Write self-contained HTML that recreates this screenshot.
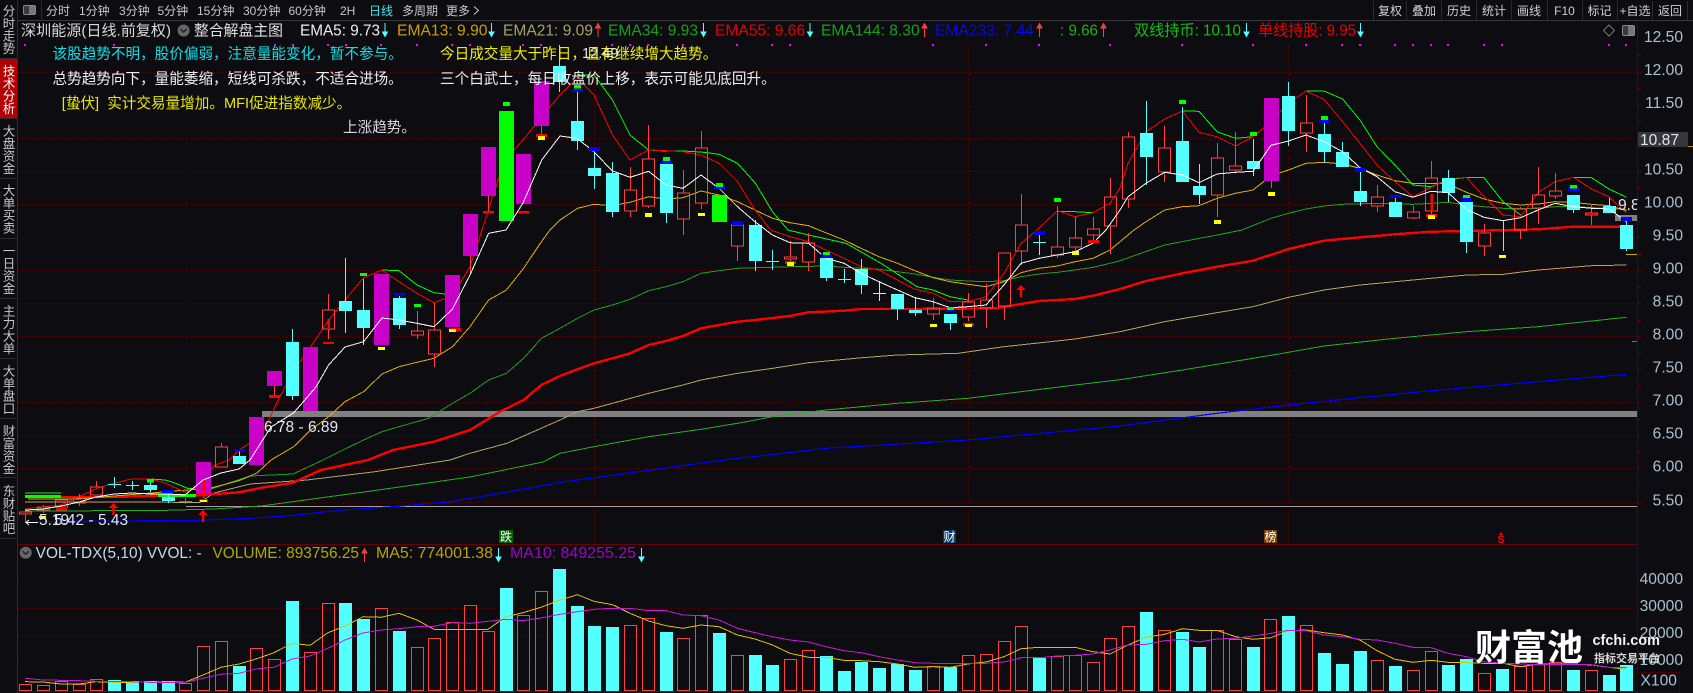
<!DOCTYPE html>
<html lang="zh"><head><meta charset="utf-8"><title>深圳能源</title>
<style>
html,body{margin:0;padding:0;background:#0d0d11;width:1693px;height:693px;overflow:hidden}
svg{display:block}
text{font-family:"Liberation Sans","Noto Sans CJK SC",sans-serif;white-space:pre}
.nav{font-size:12px;fill:#c8c8c8}
.btn{font-size:12px;fill:#d0d0d0;text-anchor:middle}
.leg{font-size:15.4px}
.msg{font-size:14.6px}
.side{font-size:12.5px;fill:#c8c8c8;text-anchor:middle}
.ax{font-size:15.6px;fill:#a8c0d2;text-anchor:end}
</style></head><body>
<svg width="1693" height="693" viewBox="0 0 1693 693" xmlns="http://www.w3.org/2000/svg">
<defs>
<path id="ad" d="M0 23V33M-2.5 32H2.5L0 36.5Z" fill="#54ffff" stroke="#54ffff" stroke-width="1"/>
<path id="au" d="M0 37V27M-2.5 28H2.5L0 23.5Z" fill="#ff3c3c" stroke="#ff3c3c" stroke-width="1"/>
<path id="bigu" d="M-1.2 12V5H-4.8L0 0L4.8 5H1.2V12Z" fill="#ff0000"/>
</defs>
<rect width="1693" height="693" fill="#0d0d11"/>

<!-- grid -->
<g stroke="#620000" stroke-width="1" stroke-dasharray="1 3" shape-rendering="crispEdges" fill="none">
<path d="M18 72.5H1637M18 105.5H1637M18 138.5H1637M18 171.5H1637M18 204.5H1637M18 237.5H1637M18 270.5H1637M18 303.5H1637M18 336.5H1637M18 369.5H1637M18 402.5H1637M18 435.5H1637M18 468.5H1637M18 502.5H1637"/>
<path d="M18 581.5H1637M18 608.5H1637M18 635.5H1637M18 661.5H1637"/>
<path d="M185.5 46V544M594.5 46V544M968.5 46V544M1288.5 46V544"/>
</g>
<path d="M18 544.5H1637M18 691.5H1637" stroke="#6b0000" fill="none" shape-rendering="crispEdges"/>
<path d="M1637.5 22V693" stroke="#5a0000" fill="none" shape-rendering="crispEdges"/>
<path d="M1637 55.5h4M1637 72.5h4M1637 88.5h4M1637 105.5h4M1637 121.5h4M1637 171.5h4M1637 188.5h4M1637 204.5h4M1637 221.5h4M1637 237.5h4M1637 254.5h4M1637 270.5h4M1637 287.5h4M1637 303.5h4M1637 320.5h4M1637 336.5h4M1637 353.5h4M1637 369.5h4M1637 386.5h4M1637 402.5h4M1637 419.5h4M1637 435.5h4M1637 452.5h4M1637 468.5h4M1637 485.5h4M1637 502.5h4" stroke="#6b0000" shape-rendering="crispEdges"/>

<!-- top bar -->
<path d="M18 20.5H1693" stroke="#38383c" shape-rendering="crispEdges"/>
<path d="M41.5 1V20M1373.5 1V20M1406.5 1V20M1441.5 1V20M1476.5 1V20M1511.5 1V20M1547.5 1V20M1582.5 1V20M1617.5 1V20M1652.5 1V20M1687.5 1V20" stroke="#2c2c30" shape-rendering="crispEdges"/>
<rect x="23.5" y="5.5" width="12" height="9" rx="1.5" fill="#3a3a3e" stroke="#8a8a8a"/><rect x="29" y="6" width="6" height="8" fill="#777"/>
<g class="nav">
<text x="46" y="15">分时</text><text x="79" y="15">1分钟</text><text x="119" y="15">3分钟</text><text x="157.5" y="15">5分钟</text><text x="197" y="15">15分钟</text><text x="243" y="15">30分钟</text><text x="288.5" y="15">60分钟</text><text x="340" y="15">2H</text><text x="369" y="15" style="fill:#3ee8f0">日线</text><text x="402" y="15">多周期</text><text x="446" y="15">更多</text>
</g>
<path d="M474 6.5L478.5 10.5L474 14.5" stroke="#c8c8c8" fill="none"/>
<g class="btn">
<text x="1390" y="15">复权</text><text x="1424" y="15">叠加</text><text x="1459" y="15">历史</text><text x="1494" y="15">统计</text><text x="1529" y="15">画线</text><text x="1564.5" y="15">F10</text><text x="1599.5" y="15">标记</text><text x="1635" y="15">+自选</text><text x="1670" y="15">返回</text>
</g>

<!-- sidebar -->
<rect x="0" y="59" width="17" height="59" fill="#b30000"/>
<path d="M17.5 0V693M0 58.5H18M0 118.5H18M0 178.5H18M0 238.5H18M0 298.5H18M0 358.5H18M0 418.5H18M0 477.5H18M0 538.5H18" stroke="#2c2c30" fill="none" shape-rendering="crispEdges"/>
<g class="side">
<text><tspan x="9" y="15.5">分</tspan><tspan x="9" y="28">时</tspan><tspan x="9" y="40.5">走</tspan><tspan x="9" y="53">势</tspan></text>
<text style="fill:#fff"><tspan x="9" y="75.5">技</tspan><tspan x="9" y="88">术</tspan><tspan x="9" y="100.5">分</tspan><tspan x="9" y="113">析</tspan></text>
<text><tspan x="9" y="135.5">大</tspan><tspan x="9" y="148">盘</tspan><tspan x="9" y="160.5">资</tspan><tspan x="9" y="173">金</tspan></text>
<text><tspan x="9" y="195">大</tspan><tspan x="9" y="207.5">单</tspan><tspan x="9" y="220">买</tspan><tspan x="9" y="232.5">卖</tspan></text>
<text><tspan x="9" y="255.5">一</tspan><tspan x="9" y="268">日</tspan><tspan x="9" y="280.5">资</tspan><tspan x="9" y="293">金</tspan></text>
<text><tspan x="9" y="315.5">主</tspan><tspan x="9" y="328">力</tspan><tspan x="9" y="340.5">大</tspan><tspan x="9" y="353">单</tspan></text>
<text><tspan x="9" y="375.5">大</tspan><tspan x="9" y="388">单</tspan><tspan x="9" y="400.5">盘</tspan><tspan x="9" y="413">口</tspan></text>
<text><tspan x="9" y="435.5">财</tspan><tspan x="9" y="448">富</tspan><tspan x="9" y="460.5">资</tspan><tspan x="9" y="473">金</tspan></text>
<text><tspan x="9" y="495.5">东</tspan><tspan x="9" y="508">财</tspan><tspan x="9" y="520.5">贴</tspan><tspan x="9" y="533">吧</tspan></text>
</g>

<!-- magenta dots -->
<path fill="#ff00ff" shape-rendering="crispEdges" d="M24 44h2v2h-2zM113 44h2v2h-2zM274 44h2v2h-2zM292 44h2v2h-2zM327 44h2v2h-2zM345 44h2v2h-2zM380 44h2v2h-2zM416 44h2v2h-2zM451 44h2v2h-2zM469 44h2v2h-2zM522 44h2v2h-2zM540 44h2v2h-2zM611 44h2v2h-2zM629 44h2v2h-2zM647 44h2v2h-2zM682 44h2v2h-2zM736 44h2v2h-2zM771 44h2v2h-2zM789 44h2v2h-2zM932 44h2v2h-2zM985 44h2v2h-2zM1038 44h2v2h-2zM1109 44h2v2h-2zM1181 44h2v2h-2zM1252 44h2v2h-2zM1305 44h2v2h-2zM1341 44h2v2h-2zM1359 44h2v2h-2zM1394 44h2v2h-2zM1412 44h2v2h-2zM1430 44h2v2h-2zM1447 44h2v2h-2zM1483 44h2v2h-2zM1501 44h2v2h-2zM1608 44h2v2h-2zM1625 44h2v2h-2z"/>

<!-- gray bands -->
<rect x="262" y="411" width="1375" height="6" fill="#808080"/>
<path d="M186 506.5H1637" stroke="#a0a0a0" shape-rendering="crispEdges"/>
<rect x="1615" y="215" width="22" height="6" fill="#808080"/>

<!-- EMA lines -->
<g fill="none" stroke-width="1" shape-rendering="crispEdges">
<polyline stroke="#0000ff" stroke-width="1.2" points="36,521.5 193,520.5 250,518.3 286,516 343,510 393,506.7 450,501.7 500,493.3 560,482.5 631,472.7 724,460 826,448.3 968,440 1120,426 1217,413.3 1288.5,405 1360,397.7 1431,390.7 1538,381.7 1626.6,374.3"/>
<polyline stroke="#22b022" points="25,511 159,510.5 214,509 261,506 364,492 470,477 543,462 560,453.3 594,446.7 648.6,436.7 701,429.3 737.5,423.3 772.5,416.7 826,410 897.5,403.3 968,398.3 1021,391.7 1075,385 1120,379.7 1182.5,370 1253,358.3 1288.5,352.3 1324,346 1395,338.3 1466.5,331.7 1538,326.7 1626.6,317.3"/>
<path stroke="#22b022" d="M1632 341.5H1637"/>
<polyline stroke="#b0a860" points="25,502 200,502.3 214,493 250,484 307,480 375,471.7 450,460 470,453.3 507,443.3 560,420 577.5,411.7 594,408.3 612.5,403.3 648.6,393.3 683,385 701,380 737.5,373.3 772.5,368.3 808.6,362.7 862,357.7 897.5,355 958,353.3 1004,346.7 1075,339 1120,331.7 1164.6,321.7 1217,312.7 1253,306.7 1288.5,297.3 1324,290 1360,285 1431,278.3 1466.5,275 1503,274.3 1538,270 1591.5,265.7 1626.6,265"/>
<polyline stroke="#ff0000" stroke-width="2.4" points="61,497 115,497 161,495.6 195,495.5 211,494.3 239,492.3 264,487.3 293,482.7 321,470 368,460 393,450 434,441.7 470,430 500,411.7 523.6,400 541.4,385 560,376 577.5,369.3 594,363.3 612.5,358.3 630,353.3 648.6,345 666,341 683,336 701,328.3 719,325 737.5,321.7 755,320 790,316 808.6,312.3 844,310.7 861,309 917,309 996,308.3 1021,304 1039,301 1075,299 1093,295.7 1120,289 1146,281 1182.5,273.3 1217,266.7 1253,260.7 1288.5,249 1324,240.7 1360,237.3 1395,234.3 1431,231.7 1466.5,231 1538,229.3 1573,226.7 1626,226.7"/>
<path stroke="#00ff00" stroke-width="3" d="M25 496.7H61M158 495.5H196"/>
<path stroke="#00ff00" d="M25 493H61"/>
<polyline stroke="#1fa01f" points="211,489 250,476 293,474 323,460 343,450 363.6,440 382,431.7 399,426.7 428.6,418.3 452.5,403.3 470,393.3 488.6,380 506.4,373.3 523.6,358.3 541.4,338.3 560,328.3 577.5,318.3 594,310 612.5,305 630,299.3 648.6,290.7 666,286.7 683,281.7 701,273.3 719,270.7 737.5,268.3 772.5,267.3 790,266.7 826,266 844,267.3 861,268.3 879,269.3 897.5,271.7 915,274 933,277.3 950,280 968,281 986,281.7 1004,280.7 1021,276.7 1039,274 1057.5,272.3 1075,270 1093,267.3 1110,263.3 1120,260.7 1164.6,245 1217,235 1242,230 1271,218.3 1288.5,213.3 1306,209 1324,206 1342.6,204.3 1377,203.3 1395,204 1413,204.3 1431,203.3 1448,202.3 1466.5,205 1484,206.7 1503,208.3 1538,208.3 1555,206.7 1573.6,206.7 1626.6,209.3"/>
<polyline stroke="#e0b000" points="28,499 78,499 211,488 239,480.7 257,473 271,460 293.6,446.7 310.7,430 328.6,416.7 345,401.7 363.6,391.7 382,374 399,366.7 417,362.3 434,358.3 452.5,346.7 470,326.7 488.6,300 506.4,290 523.6,268.3 541.4,241.7 550,230 560,220 577.5,208.3 594,204.3 612.5,205.7 630,202.3 648.6,196.7 666,199 683,197.7 701,191 719,195 737.5,201.7 755,210 772.5,218.3 790,222.7 808.6,225.7 819,230 844,240 861,248.3 879,256.7 897.5,263.3 915,270.7 933,277.7 950,281.7 968,284.3 986,286.7 1004,281.7 1021,272.7 1039,268.3 1057.5,266 1075,261.7 1093,258.3 1110,250 1120,241.7 1134,230 1146,221.7 1164.6,210 1182.5,206.7 1199,205.7 1217,198.3 1235.5,193.3 1253,190 1271,175.7 1288.5,170 1306,163.3 1324,162.3 1342.6,164 1360,168.3 1377,175 1395,180.7 1413,183.3 1431,183.3 1448,184 1466.5,192.3 1484,199 1503,203.3 1520.6,205 1538,204 1555,201.7 1573.6,202.3 1591.5,204.3 1609,205.7 1626.6,210.7"/>
<path stroke="#c8b000" d="M1626 254.5H1637"/>
<!-- green segments -->
<g stroke="#00ff00">
<polyline points="144,479 151,479 165,480 175,483 188,488.5 201,488"/>
<polyline points="382,270 399,270.7 417,285 434,292.7 452.5,295"/>
<polyline points="577.5,75 594,75 612.5,100 630,135 648.6,150 666,151 683,151 701,152 719,154.3 737.5,163.3 755,182.7 772.5,211.7 788,230 808.6,235 846,243.3 881,263.3 917,286.7 933,290 950,296.7 968,300"/>
<polyline points="1057.5,211.7 1075,211.7 1093,212.7"/>
<polyline points="1182.5,111 1199,111.3 1217,131.7 1235.5,138.3 1253,136.7"/>
<polyline points="1306,91 1324,91 1342.6,99 1360,120 1377,146.7 1395,165 1413,185 1431,186.7 1448,180 1466.5,177.3 1484,177.7 1503,201.7 1520.6,215"/>
<polyline points="1573.6,177.3 1591.5,177.7 1609,189 1626.6,197.3"/>
</g>
<!-- red thin -->
<polyline stroke="#ff0000" points="25,509 61,505 78,497 98,488 115,483 131,479 151,479 165,483 185,492 195,488 215,465 229,460 239,450 250,443 264,430 275,406.7 293.6,370 310.7,346.7 328.6,320 345,300 363.6,277.7 382,270 399,281.7 417,293.3 434,302.7 452.5,295.7 470,266.7 482,230 498,180 505,160 523,140 541.7,116.7 560,95 577,78.3 594,95 612.5,135 630,160 648.6,150 666,150.7 683,151.7 701,155 719,163.3 737.5,181.7 755,210 770.7,230 790,236.7 808.6,241.7 826,250 844,258.3 861,266.7 879,270 897.5,280 915,289.3 933,293.3 950,301.7 968,301.7 986,296.7 1004,273.3 1021,243.3 1035,231.7 1057.5,210.7 1075,216.7 1093,212.7 1110,203.3 1120,188 1128,163.3 1146,131.7 1164.6,119 1182.5,111 1199,132.3 1217,136.7 1235.5,146 1253,136.7 1271,121.7 1288.5,103.3 1306,91 1324,99.3 1342.6,121.7 1360,143.3 1377,165 1395,181.7 1413,196.7 1431,187.3 1448,179 1466.5,177.3 1484,196.7 1503,215 1520.6,216.7 1538,192.7 1555,181.7 1573.6,177.3 1591.5,189 1609,196.7 1626.6,213.3"/>
</g>

<!-- candles: magenta + green -->
<path fill="#c800c8" shape-rendering="crispEdges" d="M196 462h15v32h-15zM249 417h15v48h-15zM267 371h15v15h-15zM303 347h15v64h-15zM374 274h15v71h-15zM445 275h15v52h-15zM463 214h15v42h-15zM481 147h15v49h-15zM516 154h15v50h-15zM534 81h15v45h-15zM1264 98h15v83h-15z"/>
<path fill="#00ff00" shape-rendering="crispEdges" d="M499 111h15v110h-15zM712 195h15v27h-15z"/>
<!-- cyan -->
<path fill="#54ffff" shape-rendering="crispEdges" d="M144 485h13v5h-13zM162 497h13v4h-13zM233 456h13v8h-13zM286 342h13v54h-13zM339 301h13v10h-13zM357 310h13v18h-13zM393 298h13v27h-13zM553 66h13v16h-13zM571 121h13v20h-13zM588 168h13v8h-13zM606 173h13v39h-13zM660 164h13v49h-13zM749 225h13v36h-13zM820 258h13v20h-13zM855 269h13v16h-13zM891 294h13v15h-13zM909 310h13v3h-13zM944 314h13v9h-13zM1140 133h13v24h-13zM1176 141h13v41h-13zM1193 186h13v9h-13zM1247 161h13v8h-13zM1282 96h13v35h-13zM1318 134h13v18h-13zM1336 152h13v15h-13zM1354 191h13v11h-13zM1389 202h13v15h-13zM1442 178h13v15h-13zM1460 202h13v40h-13zM1567 195h13v15h-13zM1603 206h13v7h-13zM1620 225h13v24h-13z"/>
<path stroke="#54ffff" fill="none" shape-rendering="crispEdges" d="M559.5 45V66M559.5 82V92M114.5 477V488M108 484.5H121M132.5 481V490M126 485.5H139M150.5 480V492M168.5 493V503M239.5 451V456M292.5 329V342M292.5 396V400M345.5 258V301M345.5 311V333M363.5 279V310M363.5 328V345M399.5 296V298M399.5 325V329M577.5 92V121M577.5 141V150M594.5 152V168M594.5 176V189M612.5 162V173M612.5 212V217M666.5 213V223M755.5 220V225M755.5 261V271M772.5 250V270M766 261.5H779M826.5 278V281M844.5 269V283M838 279.5H851M861.5 259V269M861.5 285V294M897.5 309V320M915.5 297V316M950.5 323V330M1039.5 233V255M1033 242.5H1046M1146.5 101V133M1146.5 157V185M1182.5 107V141M1199.5 164V186M1199.5 195V204M1253.5 139V161M1253.5 169V176M1288.5 82V96M1288.5 131V146M1324.5 123V134M1324.5 152V163M1342.5 142V152M1360.5 172V191M1360.5 202V206M1395.5 198V202M1448.5 170V178M1448.5 193V202M1466.5 242V253M1503.5 220V251M1573.5 210V213M1609.5 198V206M1626.5 222V225M1626.5 249V251"/>
<path stroke="#e0e0e0" fill="none" shape-rendering="crispEdges" d="M879.5 281V301M873 293.5H886"/>
<!-- red hollow candles -->
<path stroke="#ff4040" fill="none" shape-rendering="crispEdges" d="M19.5 512h12v2h-12zM25.5 514V523M37.5 507h12v3h-12zM43.5 505V507M43.5 510V513M55.5 500h12v7h-12zM73.5 498h12v5h-12zM79.5 494V498M79.5 503V506M90.5 487h12v8h-12zM96.5 481V487M179 501.5H192M185.5 498V504M215.5 447h12v20h-12zM221.5 443V447M322.5 310h12v19h-12zM328.5 294V310M328.5 329V339M411.5 331h12v4h-12zM417.5 311V331M417.5 335V339M428.5 330h12v24h-12zM434.5 303V330M434.5 354V367M624.5 190h12v21h-12zM630.5 167V190M630.5 211V217M642.5 159h12v47h-12zM648.5 125V159M648.5 206V208M677.5 193h12v26h-12zM683.5 170V193M683.5 219V235M695.5 148h12v55h-12zM701.5 131V148M701.5 203V209M731.5 225h12v21h-12zM737.5 246V261M784.5 257h12v2h-12zM790.5 241V257M790.5 259V262M802.5 243h12v19h-12zM808.5 233V243M808.5 262V271M927.5 308h12v6h-12zM933.5 298V308M933.5 314V320M962.5 302h12v15h-12zM968.5 293V302M968.5 317V321M980.5 300h12v8h-12zM986.5 284V300M986.5 308V328M998.5 253h12v53h-12zM1004.5 306V320M1015.5 225h12v26h-12zM1021.5 194V225M1021.5 251V265M1051.5 247h12v8h-12zM1057.5 206V247M1057.5 255V258M1069.5 238h12v9h-12zM1075.5 217V238M1075.5 247V252M1087.5 229h12v6h-12zM1093.5 217V229M1093.5 235V240M1104.5 197h12v29h-12zM1110.5 178V197M1110.5 226V254M1122.5 137h12v62h-12zM1128.5 132V137M1128.5 199V208M1158.5 148h12v24h-12zM1164.5 126V148M1164.5 172V182M1211.5 158h12v37h-12zM1217.5 143V158M1217.5 195V217M1229.5 166h12v4h-12zM1235.5 132V166M1235.5 170V172M1300.5 123h12v10h-12zM1306.5 95V123M1306.5 133V152M1371.5 197h12v9h-12zM1377.5 185V197M1377.5 206V212M1407.5 212h12v6h-12zM1413.5 206V212M1413.5 218V219M1425.5 178h12v33h-12zM1431.5 161V178M1431.5 211V214M1478.5 233h12v13h-12zM1484.5 224V233M1484.5 246V256M1514.5 209h12v21h-12zM1520.5 207V209M1520.5 230V239M1532.5 195h12v13h-12zM1538.5 167V195M1538.5 208V224M1549.5 191h12v5h-12zM1555.5 173V191M1555.5 196V199M1585.5 213h12v2h-12zM1591.5 204V213M1591.5 215V225M274.5 386V395M470.5 256V273M488.5 196V211M541.5 126V134M1271.5 181V188"/>
<path stroke="#ff0000" stroke-width="2.5" fill="none" shape-rendering="crispEdges" d="M328.5 319V328M1431.5 194V211M203.5 479V498"/>
<!-- white EMA5 -->
<polyline fill="none" stroke="#ffffff" shape-rendering="crispEdges" points="25,510 43,509 61,506 79,502 96,497 114,494 132,493 150,494 168,494 185,495 203,480 221,473 239,469 250,460 271,427 293.6,413 316,387 328.6,365 345,347 363.6,341.7 382,318 399,320 417,323.3 434,326.7 452.5,309 470,275 488.6,233.3 506,230 523,203 541.7,160 560,136 577,138.3 594,151.7 612,170.7 630,177.3 648.6,171.3 666,185 683,188.3 701,175 719,188.3 737.5,206.7 755,221.7 772.5,235 790,242.7 808.6,243.3 826,258.3 844,263.3 861,273.3 879,281.7 897.5,290 915,297.7 933,301.7 950,307.7 968,306.7 986,305 1004,285 1021,263.3 1039,258.3 1057,255 1075,251.7 1093,243.3 1106,230 1120,210 1128,196.7 1146,183.3 1164.6,172.3 1182.5,175 1199,182.7 1217,174 1235.5,172.3 1253,171.3 1271,145.3 1288.5,141 1306,135 1324,141.7 1342.6,151.7 1360,167.7 1377,176.7 1395,191.7 1413,197.3 1431,191.3 1448,192.7 1466.5,209.3 1484,217.3 1503,220.7 1520.6,217.7 1538,210 1555,203.3 1573.6,206.7 1591.5,208.3 1609,209 1626.6,221.7"/>

<!-- markers -->
<path fill="#0000ff" shape-rendering="crispEdges" d="M162 490h12v3.5h-12zM234 449h11v2.5h-11zM394 293h11v2.5h-11zM572 89h11v3h-11zM589 147h11v4h-11zM661 160h11v4h-11zM714 186h11v3.5h-11zM732 221h11v4h-11zM821 254h11v4h-11zM945 309h11v3h-11zM1034 231h11v4h-11zM1319 119h11v4h-11zM1355 168h11v4h-11zM1390 195h11v3h-11zM1461 197h11v4h-11zM1568 187h11v4h-11zM1621 217h11v4h-11z"/>
<path fill="#00ff00" shape-rendering="crispEdges" d="M147 479h7v3.5h-7zM360 273h7v3h-7zM503 102h7v4h-7zM414 304h7v3h-7zM574 85h7v3.7h-7zM663 157h7v4h-7zM716 183h7v4h-7zM823 252h7v3h-7zM947 307h7v3h-7zM1054 198h7v4h-7zM1179 100h7v4h-7zM1250 132h7v4h-7zM1321 116h7v4h-7zM1463 195h7v3h-7zM1570 185h7v3.5h-7z"/>
<path fill="#ff0000" shape-rendering="crispEdges" d="M56 508h11v2.5h-11zM269 395h11v3h-11zM323 342h11v2h-11zM450 328h11v3h-11zM483 211h11v2.5h-11zM518 211h11v2.5h-11zM536 134h11v3h-11zM785 261h11v3h-11zM963 323h11v3h-11zM1088 240h11v3h-11zM1426 214h11v3h-11zM199 499h9v3h-9zM1586 213h11v2h-11z"/>
<path fill="#ffff00" shape-rendering="crispEdges" d="M39 516h7v2.5h-7zM200 500h7v2h-7zM378 347h7v3h-7zM449 329h7v3h-7zM538 136h7v4h-7zM645 213h7v4h-7zM698 213h7v3h-7zM787 262h7v4h-7zM930 324h7v3h-7zM965 324h7v3h-7zM1072 251h7v4h-7zM1214 220h7v4h-7zM1268 192h7v4h-7zM1428 215h7v4h-7zM1499 255h7v3h-7z"/>
<use href="#bigu" x="113.5" y="503"/><use href="#bigu" x="203" y="510"/><use href="#bigu" x="1021" y="285"/>
<path d="M38 522.5H26M29 520L26 522.5L29 525" stroke="#fff" fill="none"/>

<!-- volume bars -->
<path fill="#54ffff" shape-rendering="crispEdges" d="M108 680h13v11h-13zM126 681h13v10h-13zM144 681h13v10h-13zM162 681h13v10h-13zM233 666h13v25h-13zM286 601h13v90h-13zM339 603h13v88h-13zM357 619h13v72h-13zM393 631h13v60h-13zM500 588h13v103h-13zM553 569h13v122h-13zM571 606h13v85h-13zM588 626h13v65h-13zM606 627h13v64h-13zM660 632h13v59h-13zM713 633h13v58h-13zM749 655h13v36h-13zM766 665h13v26h-13zM820 656h13v35h-13zM838 671h13v20h-13zM855 662h13v29h-13zM873 668h13v23h-13zM891 664h13v27h-13zM909 670h13v21h-13zM944 667h13v24h-13zM1033 658h13v33h-13zM1140 612h13v79h-13zM1176 632h13v59h-13zM1193 647h13v44h-13zM1247 647h13v44h-13zM1282 616h13v75h-13zM1318 653h13v38h-13zM1336 664h13v27h-13zM1354 651h13v40h-13zM1389 666h13v25h-13zM1442 665h13v26h-13zM1460 659h13v32h-13zM1496 669h13v22h-13zM1567 670h13v21h-13zM1603 675h13v16h-13zM1620 665h13v26h-13z"/>
<path fill="none" stroke="#ff4040" shape-rendering="crispEdges" d="M19.5 684.5h12v6h-12zM37.5 685.5h12v5h-12zM55.5 681.5h12v9h-12zM73.5 684.5h12v6h-12zM90.5 679.5h12v11h-12zM179.5 683.5h12v7h-12zM197.5 646.5h12v44h-12zM215.5 641.5h12v49h-12zM250.5 648.5h12v42h-12zM268.5 659.5h12v31h-12zM304.5 652.5h12v38h-12zM322.5 603.5h12v87h-12zM375.5 608.5h12v82h-12zM411.5 647.5h12v43h-12zM428.5 638.5h12v52h-12zM446.5 622.5h12v68h-12zM464.5 605.5h12v85h-12zM482.5 631.5h12v59h-12zM517.5 615.5h12v75h-12zM535.5 591.5h12v99h-12zM624.5 625.5h12v65h-12zM642.5 618.5h12v72h-12zM677.5 638.5h12v52h-12zM695.5 615.5h12v75h-12zM731.5 655.5h12v35h-12zM784.5 659.5h12v31h-12zM802.5 650.5h12v40h-12zM927.5 666.5h12v24h-12zM962.5 655.5h12v35h-12zM980.5 654.5h12v36h-12zM998.5 641.5h12v49h-12zM1015.5 626.5h12v64h-12zM1051.5 656.5h12v34h-12zM1069.5 655.5h12v35h-12zM1087.5 662.5h12v28h-12zM1104.5 638.5h12v52h-12zM1122.5 626.5h12v64h-12zM1158.5 630.5h12v60h-12zM1211.5 630.5h12v60h-12zM1229.5 639.5h12v51h-12zM1264.5 619.5h12v71h-12zM1300.5 625.5h12v65h-12zM1371.5 660.5h12v30h-12zM1407.5 670.5h12v20h-12zM1425.5 651.5h12v39h-12zM1478.5 673.5h12v17h-12zM1514.5 666.5h12v24h-12zM1532.5 664.5h12v26h-12zM1549.5 662.5h12v28h-12zM1585.5 670.5h12v20h-12z"/>
<polyline fill="none" stroke="#e0c000" shape-rendering="crispEdges" points="25,681.7 43,682 61,684 79,684 96,681.7 114,682.3 132,682.3 150,682 168,681.7 185,682.3 203,675 221,667.3 239,664 256,659 274,652.7 292,643.3 310,645.3 328,632.7 345,626 363,616.7 381,617.3 399,613.3 417,620 434,629.3 452,629.3 470,629.3 488,629.3 506,616.7 523,612.7 541,607.3 560,600 577.5,594.7 594,601.3 612.5,604.7 630,613.3 648.6,621 666,625.7 683,628.3 701,625 719,626.7 737.5,635 755,639 772.5,645 790,653.3 808.6,657.3 826,657.3 844,660.3 861,660.7 879,661.7 897.5,664 915,667.3 933,666.7 950,667.3 968,664 986,662 1004,656.7 1021,648.7 1039,647.3 1057.5,647.3 1075,647.3 1093,651.7 1110,654 1128,645 1146,637.3 1164.6,634.3 1182.5,628.7 1199,630.3 1217,630.3 1235.5,636.7 1253,639.3 1271,637.7 1288.5,630.7 1306,630 1324,632.7 1342.6,635 1360,640 1377,650.7 1395,659.3 1413,662.3 1431,660.3 1448,662.3 1466.5,662.7 1484,663.3 1503,663.3 1520.6,666.7 1538,664 1555,664 1573.6,664 1591.5,665 1609,667.3 1626.6,669.3"/>
<polyline fill="none" stroke="#c818d8" shape-rendering="crispEdges" points="25,678.3 43,680 61,680.3 79,680.7 96,681.3 114,681.7 132,681.7 150,682.3 168,682.3 185,682.3 203,678.3 221,674.3 239,673.3 256,669 274,667.3 292,659 310,656 328,648.3 345,640 363,633 381,630 399,628.7 417,626.7 434,626.3 452,622.7 470,623.3 488,621.3 506,619.3 523,620.7 541,618 560,614.3 577.5,611.7 594,609.3 612.5,608.3 630,608.3 648.6,610.7 666,610.7 683,615 701,615.7 719,620 737.5,628.3 755,632.7 772.5,636.7 790,640 808.6,642 826,646.7 844,650.7 861,652.7 879,656.7 897.5,660 915,662.7 933,663.3 950,663.3 968,663.3 986,663.3 1004,662 1021,657.7 1039,657.7 1057.5,656 1075,655.3 1093,654 1110,650 1128,645 1146,644.3 1164.6,640.7 1182.5,639.3 1199,642 1217,639 1235.5,638.3 1253,636 1271,633.3 1288.5,630.3 1306,630.7 1324,635 1342.6,636.7 1360,639.3 1377,640 1395,643.3 1413,647.3 1431,647.7 1448,653.3 1466.5,656.7 1484,661.7 1503,663.3 1520.6,664 1538,664.7 1555,664.7 1573.6,664.7 1591.5,664.7 1609,667.3 1626.6,667.3"/>

<!-- axis labels -->
<g class="ax">
<text x="1683" y="42">12.50</text><text x="1683" y="75">12.00</text><text x="1683" y="108">11.50</text><text x="1683" y="174.5">10.50</text><text x="1683" y="207.5">10.00</text><text x="1683" y="240.5">9.50</text><text x="1683" y="273.5">9.00</text><text x="1683" y="306.5">8.50</text><text x="1683" y="339.5">8.00</text><text x="1683" y="372.5">7.50</text><text x="1683" y="405.5">7.00</text><text x="1683" y="438.5">6.50</text><text x="1683" y="471.5">6.00</text><text x="1683" y="505.5">5.50</text>
<text x="1683" y="584">40000</text><text x="1683" y="611">30000</text><text x="1683" y="638">20000</text><text x="1683" y="665">10000</text>
</g>
<rect x="1638" y="132" width="50" height="15" fill="#36363a"/>
<text x="1640" y="145" style="font-size:15.6px;fill:#dce6ee">10.87</text>
<path d="M1688 146.5h5" stroke="#c89000"/>
<rect x="1637.5" y="672.5" width="42" height="19" fill="none" stroke="#4a0000"/>
<text x="1640.5" y="685.5" style="font-size:15.6px;fill:#a8c0d2">X100</text>
<text x="1618" y="210" style="font-size:15.6px;fill:#dce6ee">9.8</text>
<rect x="1637" y="200" width="6" height="16" fill="#0d0d11"/>
<!-- top right icons -->
<path d="M1609 25L1614.5 30.5L1609 36L1603.5 30.5Z" fill="none" stroke="#777"/>
<rect x="1622.5" y="25.5" width="12" height="10" rx="1.5" fill="#3a3a3e" stroke="#8a8a8a"/><rect x="1628" y="26" width="6" height="9" fill="#777"/>

<!-- legend -->
<circle cx="183.6" cy="30.5" r="6" fill="#666"/><path d="M180.5 29L183.6 32L186.7 29" stroke="#222" stroke-width="1.4" fill="none"/>
<g class="leg">
<text x="21" y="35.5" style="fill:#d8d8d8;font-size:14.8px" textLength="150" lengthAdjust="spacingAndGlyphs">深圳能源(日线.前复权)</text>
<text x="194" y="35.5" style="fill:#e0e0e0;font-size:14.8px" textLength="89" lengthAdjust="spacingAndGlyphs">整合解盘主图</text>
<text x="300" y="35.5" style="fill:#eeeeee" textLength="80" lengthAdjust="spacingAndGlyphs">EMA5: 9.73</text>
<text x="397" y="35.5" style="fill:#c8a000" textLength="90.5" lengthAdjust="spacingAndGlyphs">EMA13: 9.90</text>
<text x="503" y="35.5" style="fill:#a8a060" textLength="90" lengthAdjust="spacingAndGlyphs">EMA21: 9.09</text>
<text x="608" y="35.5" style="fill:#18a018" textLength="90" lengthAdjust="spacingAndGlyphs">EMA34: 9.93</text>
<text x="715" y="35.5" style="fill:#e80000" textLength="90" lengthAdjust="spacingAndGlyphs">EMA55: 9.66</text>
<text x="821" y="35.5" style="fill:#18a018" textLength="98.6" lengthAdjust="spacingAndGlyphs">EMA144: 8.30</text>
<text x="935" y="35.5" style="fill:#0808e8" textLength="99" lengthAdjust="spacingAndGlyphs">EMA233: 7.44</text>
<text x="1060" y="35.5" style="fill:#18b018" textLength="38" lengthAdjust="spacingAndGlyphs">: 9.66</text>
<text x="1134" y="35.5" style="fill:#10c010" textLength="107" lengthAdjust="spacingAndGlyphs">双线持币: 10.10</text>
<text x="1258" y="35.5" style="fill:#e80000" textLength="98" lengthAdjust="spacingAndGlyphs">单线持股: 9.95</text>
</g>
<use href="#ad" x="385"/><use href="#ad" x="491.5"/><use href="#au" x="598"/><use href="#ad" x="703.5"/><use href="#ad" x="810"/><use href="#au" x="924.5"/><use href="#au" x="1039.5"/><use href="#au" x="1103.5"/><use href="#ad" x="1246.5"/><use href="#ad" x="1360.5"/>

<!-- messages -->
<g class="msg">
<text x="52.5" y="58.5" style="fill:#10e0e8">该股趋势不明，股价偏弱，注意量能变化，暂不参与。</text>
<text x="440" y="58.5" style="fill:#f0f000">今日成交量大于昨日，且有继续增大趋势。</text>
<text x="582" y="58" style="fill:#e8e8e8">12.49</text>
<text x="52.5" y="83.5" style="fill:#f0f0f0">总势趋势向下，量能萎缩，短线可杀跌，不适合进场。</text>
<text x="440" y="83.5" style="fill:#f0f0f0">三个白武士，每日收盘价上移，表示可能见底回升。</text>
<text x="61.8" y="108" style="fill:#e8e800">[蛰伏]  实计交易量增加。MFI促进指数减少。</text>
<text x="343" y="132" style="fill:#d8d8d8">上涨趋势。</text>
</g>
<text x="264" y="432" style="font-size:15.5px;fill:#e0e8ee">6.78 - 6.89</text>
<text x="39" y="525" style="font-size:15.5px;fill:#e0e8ee">5.19</text>
<text x="54" y="525" style="font-size:15.5px;fill:#e0e8ee">5.42 - 5.43</text>

<!-- badges -->
<rect x="499" y="530" width="14" height="13" fill="#006400"/><text x="506" y="541" style="font-size:12px;fill:#fff;text-anchor:middle">跌</text>
<rect x="943" y="530" width="13" height="13" fill="#0a3a6a"/><text x="949.5" y="541" style="font-size:12px;fill:#fff;text-anchor:middle">财</text>
<rect x="1264" y="530" width="13" height="13" fill="#7a4000"/><text x="1270.5" y="541" style="font-size:12px;fill:#fff;text-anchor:middle">榜</text>
<text x="1501" y="543" style="font-size:11px;font-weight:bold;fill:#ff0000;text-anchor:middle">S</text>
<path d="M1501 532L1503 535H1499Z" fill="#ff0000"/>

<!-- volume legend -->
<circle cx="25.7" cy="552.7" r="6" fill="#666"/><path d="M22.6 551.2L25.7 554.2L28.8 551.2" stroke="#222" stroke-width="1.4" fill="none"/>
<g class="leg">
<text x="35.7" y="558" style="fill:#c8d8e8" textLength="166" lengthAdjust="spacingAndGlyphs">VOL-TDX(5,10) VVOL: -</text>
<text x="212.5" y="558" style="fill:#b0a800" textLength="146.5" lengthAdjust="spacingAndGlyphs">VOLUME: 893756.25</text>
<text x="376" y="558" style="fill:#c0a000" textLength="117" lengthAdjust="spacingAndGlyphs">MA5: 774001.38</text>
<text x="510" y="558" style="fill:#a000c8" textLength="126" lengthAdjust="spacingAndGlyphs">MA10: 849255.25</text>
</g>
<use href="#au" x="364.5" y="525"/><use href="#ad" x="498.5" y="525"/><use href="#ad" x="641.5" y="525"/>

<!-- watermark -->
<text x="1475" y="660" style="font-size:36px;font-weight:bold;fill:#ffffff;font-family:'Noto Sans CJK SC',sans-serif">财富池</text>
<text x="1592.5" y="645" style="font-size:15px;font-weight:bold;fill:#f4f4f4" textLength="67.5" lengthAdjust="spacingAndGlyphs">cfchi.com</text>
<text x="1594" y="662" style="font-size:11px;font-weight:bold;fill:#d8d8d8;font-family:'Noto Sans CJK SC',sans-serif">指标交易平台</text>
</svg>
</body></html>
